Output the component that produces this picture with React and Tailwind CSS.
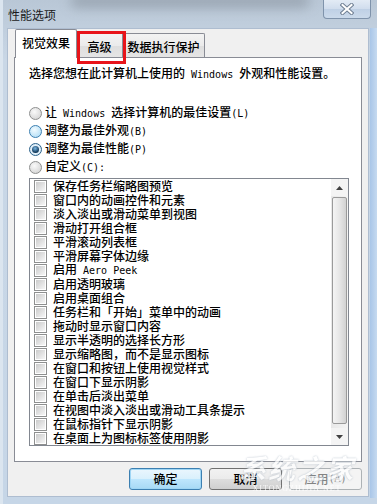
import React from "react";

function L({ children }) {
  return <span className="font-['DejaVu_Sans_Mono',monospace] text-[10px] font-normal">{children}</span>;
}

const items = [
  "保存任务栏缩略图预览",
  "窗口内的动画控件和元素",
  "淡入淡出或滑动菜单到视图",
  "滑动打开组合框",
  "平滑滚动列表框",
  "平滑屏幕字体边缘",
  <>启用<L> Aero Peek</L></>,
  "启用透明玻璃",
  "启用桌面组合",
  "任务栏和「开始」菜单中的动画",
  "拖动时显示窗口内容",
  "显示半透明的选择长方形",
  "显示缩略图，而不是显示图标",
  "在窗口和按钮上使用视觉样式",
  "在窗口下显示阴影",
  "在单击后淡出菜单",
  "在视图中淡入淡出或滑动工具条提示",
  "在鼠标指针下显示阴影",
  "在桌面上为图标标签使用阴影",
];

function Radio({ kind }) {
  if (kind === "checked")
    return (
      <span className="w-[13px] h-[13px] rounded-full border border-[#2c628b] bg-[radial-gradient(circle_at_50%_50%,#ffffff,#c9e2f4)] flex items-center justify-center shrink-0">
        <span className="w-[7px] h-[7px] rounded-full bg-[radial-gradient(circle_at_45%_35%,#7ab8e4,#0f3556_70%)]" />
      </span>
    );
  if (kind === "hover")
    return (
      <span className="w-[13px] h-[13px] rounded-full border border-[#3c7fb1] bg-[radial-gradient(circle_at_40%_35%,#f2fbff,#a6d8f4)] shrink-0" />
    );
  return (
    <span className="w-[13px] h-[13px] rounded-full border border-[#8e8f8f] bg-[radial-gradient(circle_at_40%_35%,#fafafa,#cdcdcd)] shrink-0" />
  );
}

function Check() {
  return (
    <span className="w-[13px] h-[13px] border border-[#8e8f8f] bg-white p-[1px] shrink-0 flex">
      <span className="flex-1 bg-[linear-gradient(135deg,#cbcbcb,#f6f6f6)]" />
    </span>
  );
}

function Arrow({ up }) {
  return (
    <svg width="7" height="4" viewBox="0 0 7 4">
      {up ? (
        <polygon points="0,4 7,4 3.5,0" fill="#404040" />
      ) : (
        <polygon points="0,0 7,0 3.5,4" fill="#404040" />
      )}
    </svg>
  );
}

export default function App() {
  return (
    <div className="w-[377px] h-[504px] relative overflow-hidden flex flex-col bg-[linear-gradient(180deg,#b9c7d6_0%,#c9d7e6_12%,#c6d6e7_100%)] font-['Noto_Sans_CJK_SC',sans-serif] font-medium text-[12px] leading-[14px] text-black">
      {/* blurred desktop smudges on the glass frame */}
      <div className="absolute left-[70px] top-[-6px] w-[240px] h-[14px] rounded-full bg-[#8e99a5] blur-[6px] opacity-70 pointer-events-none" />
      <div className="absolute left-[0px] top-[0px] w-[3px] h-[504px] bg-[#dbe5ef] pointer-events-none" />

      {/* title bar */}
      <div className="h-[28px] flex items-start justify-between pl-[8px] pr-[6px] relative">
        <div className="mt-[8px] text-[#1a1a1a] font-normal">性能选项</div>
        <div className="w-[48px] h-[19px] rounded-b-[4px] border border-t-0 border-[#7f93ab] bg-[linear-gradient(180deg,#e3ebf5_0%,#d0dded_50%,#bfd0e5_51%,#cbdaeb_100%)] flex items-center justify-center">
          <svg width="14" height="12" viewBox="0 0 14 12">
            <path d="M2.5 2 L11.5 10 M11.5 2 L2.5 10" stroke="#6f7f93" strokeWidth="4" strokeLinecap="square" />
            <path d="M2.5 2 L11.5 10 M11.5 2 L2.5 10" stroke="#ffffff" strokeWidth="2" strokeLinecap="square" />
          </svg>
        </div>
      </div>

      {/* client area */}
      <div className="flex-1 ml-[7px] mr-[8px] mb-[7px] bg-[#f0f0f0] border border-[#aebdd0] flex flex-col">
        {/* tabs */}
        <div className="h-[28px] flex items-end pl-[7px] relative z-10">
          <div className="h-[29px] -mb-[1px] w-[62px] bg-white border border-b-0 border-[#898c95] rounded-t-[2px] flex items-center justify-center pb-[2px]">
            视觉效果
          </div>
          <div className="h-[24px] w-[46px] bg-[linear-gradient(180deg,#f3f3f3_0%,#ebebeb_50%,#dedede_51%,#e5e5e5_100%)] border border-b-0 border-l-0 border-[#898c95] flex items-center justify-center pt-[2px]">
            高级
          </div>
          <div className="h-[24px] w-[82px] bg-[linear-gradient(180deg,#f3f3f3_0%,#ebebeb_50%,#dedede_51%,#e5e5e5_100%)] border border-b-0 border-l-0 border-[#898c95] rounded-tr-[2px] flex items-center justify-center pt-[2px]">
            数据执行保护
          </div>
        </div>

        {/* panel */}
        <div className="h-[405px] mx-[6px] bg-white border border-[#898c95] flex flex-col pl-[14px] pr-[12px] pt-[8px]">
          <div className="h-[14px] whitespace-nowrap">
            选择您想在此计算机上使用的<L> Windows </L>外观和性能设置。
          </div>
          <div className="mt-[24px] flex flex-col">
            <div className="h-[18px] flex items-center gap-[3px]">
              <Radio kind="gray" />
              <span>让<L> Windows </L>选择计算机的最佳设置<L>(L)</L></span>
            </div>
            <div className="h-[18px] flex items-center gap-[3px]">
              <Radio kind="hover" />
              <span>调整为最佳外观<L>(B)</L></span>
            </div>
            <div className="h-[18px] flex items-center gap-[3px]">
              <Radio kind="checked" />
              <span>调整为最佳性能<L>(P)</L></span>
            </div>
            <div className="h-[18px] flex items-center gap-[3px]">
              <Radio kind="gray" />
              <span>自定义<L>(C):</L></span>
            </div>
          </div>

          {/* list box */}
          <div className="mt-[2px] h-[268px] border border-[#828790] flex">
            <div className="flex-1 flex flex-col pl-[4px]">
              {items.map((t, i) => (
                <div key={i} className="h-[14px] flex items-center gap-[6px] whitespace-nowrap">
                  <Check />
                  <span>{t}</span>
                </div>
              ))}
            </div>
            <div className="w-[17px] flex flex-col bg-[linear-gradient(90deg,#e8e8e8,#f4f4f4)]">
              <div className="h-[17px] flex items-center justify-center bg-[#f4f4f4]">
                <Arrow up />
              </div>
              <div className="h-[227px] mt-[1px] mx-[1px] rounded-[2px] border border-[#9a9a9a] bg-[linear-gradient(90deg,#f4f4f4_0%,#e6e6e6_50%,#d2d2d2_100%)]" />
              <div className="flex-1" />
              <div className="h-[17px] flex items-center justify-center bg-[#f4f4f4]">
                <Arrow />
              </div>
            </div>
          </div>
        </div>

        {/* buttons */}
        <div className="mt-[6px] h-[22px] flex justify-end gap-[7px] pr-[6px]">
          <div className="w-[73px] h-[22px] rounded-[3px] border border-[#3c7fb1] bg-[linear-gradient(180deg,#eaf6fd_0%,#d9f0fc_50%,#bee6fd_51%,#a7d9f5_100%)] shadow-[inset_0_0_0_1px_#9fd6f5] flex items-center justify-center">
            确定
          </div>
          <div className="w-[73px] h-[22px] rounded-[3px] border border-[#707070] bg-[linear-gradient(180deg,#f2f2f2_0%,#ebebeb_50%,#dddddd_51%,#cfcfcf_100%)] flex items-center justify-center">
            取消
          </div>
          <div className="w-[73px] h-[22px] rounded-[3px] border border-[#adb2b5] bg-[#f4f4f4] text-[#838383] flex items-center justify-center">
            应用<L>(A)</L>
          </div>
        </div>
      </div>

      {/* red highlight box over the 高级 tab */}
      <div className="absolute left-[77px] top-[31px] w-[49px] h-[33px] border-[3px] border-[#e8141a] z-20 pointer-events-none" />

      {/* right frame stripe */}
      <div className="absolute right-[0px] top-[28px] w-[7px] h-[470px] bg-[linear-gradient(90deg,#a9c6e8,#c6daf0)] pointer-events-none" />

      {/* watermark */}
      <div className="absolute left-[222px] top-[452px] w-[150px] h-[46px] z-30 pointer-events-none flex flex-col items-center">
        <div className="text-[27px] leading-[32px] font-bold italic text-white opacity-75 tracking-[2px] [text-shadow:0_0_2px_#9aa8b8]">
          系统之家
        </div>
        <div className="text-[8px] leading-[9px] text-white opacity-80 tracking-[1px] font-['Liberation_Serif',serif]">
          XITONGZHIJIA.NET
        </div>
      </div>
    </div>
  );
}
